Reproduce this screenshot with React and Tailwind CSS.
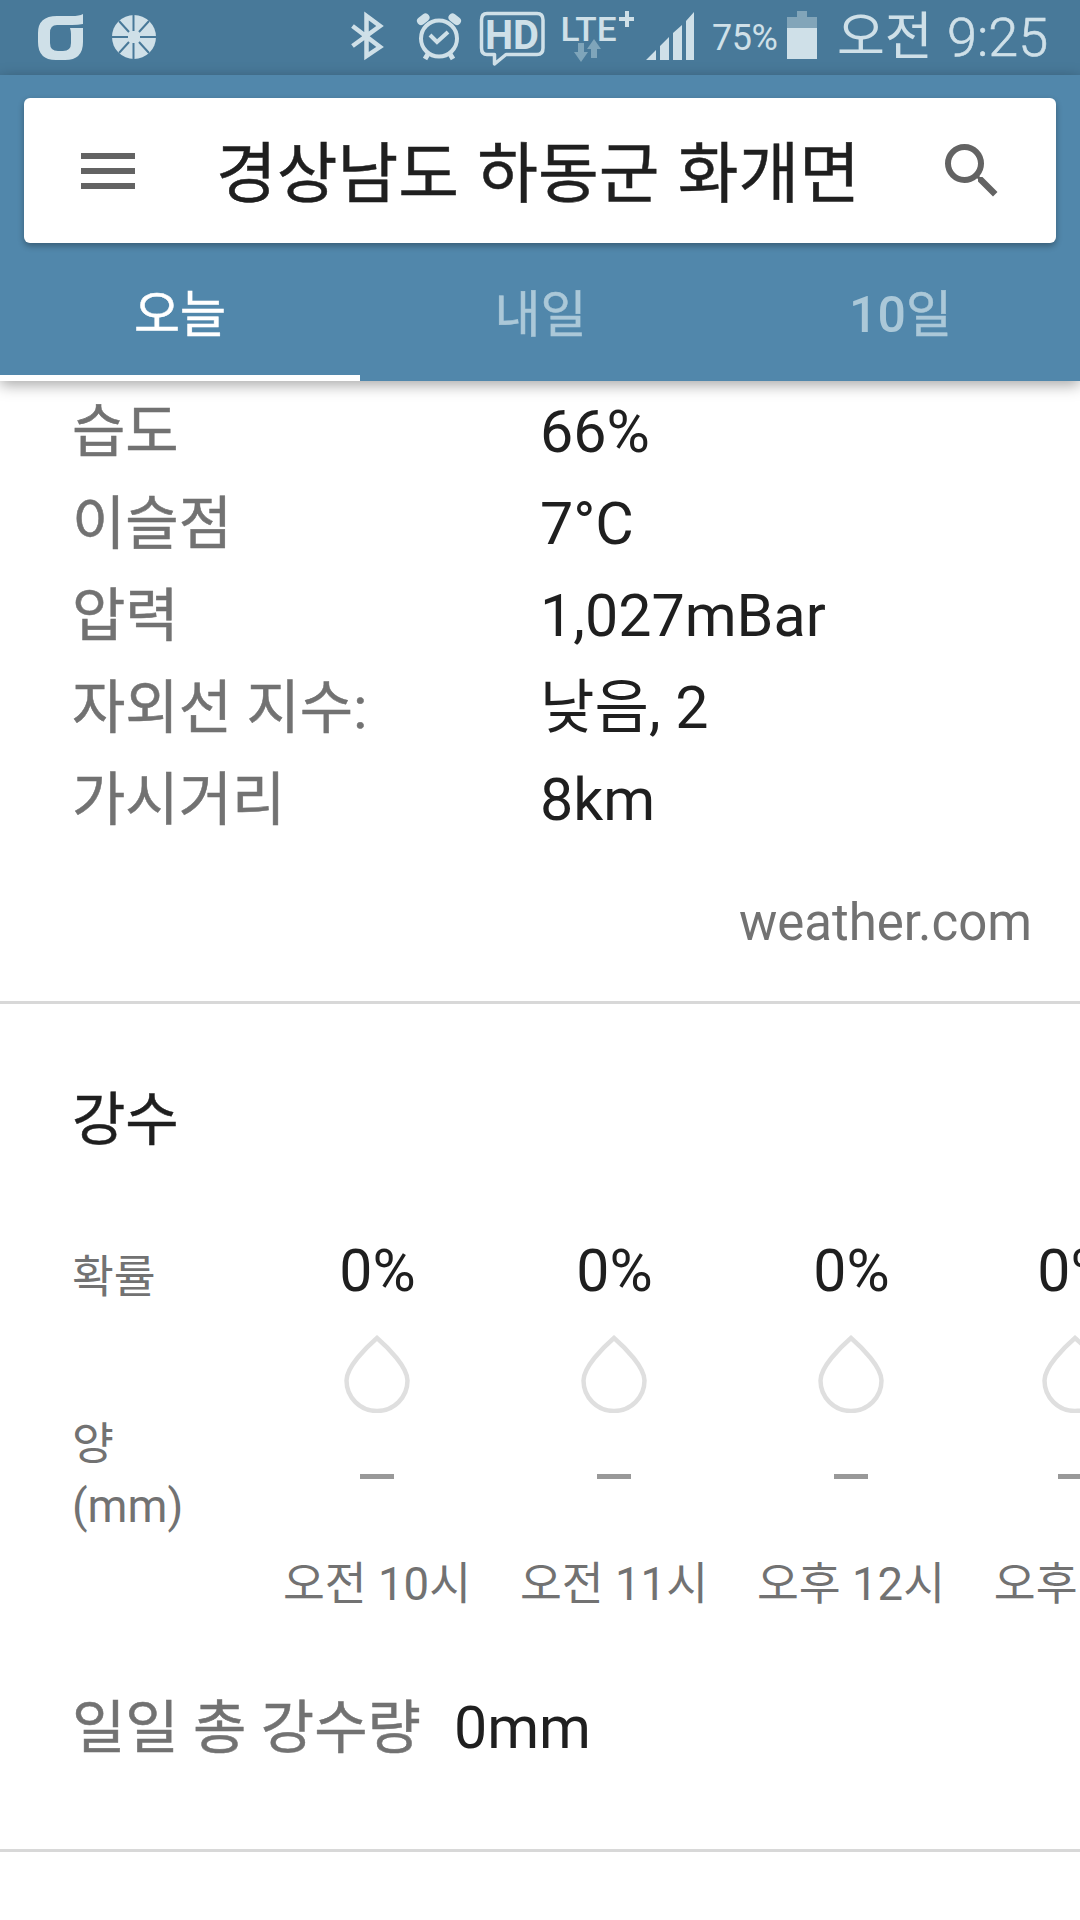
const details = [
  ['습도', '66%'],
  ['이슬점', '7°C'],
  ['압력', '1,027mBar'],
  ['자외선 지수:', '낮음, 2'],
  ['가시거리', '8km'],
];

const hours = ['오전 10시', '오전 11시', '오후 12시', '오후 1시'];

function StatusBar() {
  return (
    <div className="flex h-[75px] items-center bg-[#487999] text-[#cfe0e8]">
      <svg className="h-[75px] w-[700px] shrink-0" viewBox="0 0 700 75" fill="currentColor">
        <path d="M83 14V24Q78 25 72 25H57Q50 25 50 33V43Q50 51 58 51H63Q71 51 71 43V34Q71 31 70 28H83V42Q83 60 65 60H56Q38 60 38 42V33Q38 16 57 16H72Q79 16 83 14Z" />
        <circle cx="134" cy="37" r="22" />
        <g stroke="#487999" strokeWidth="2">
          <path d="M133.500 15V31M133.500 43V59M112 37H128M140 37H156M119 21L129 32M149 21L139 32M119 53L129 42M149 53L139 42" />
        </g>
        <path fill="none" stroke="currentColor" strokeWidth="4.500" d="M352.500 26L380 47L366.500 56V16L380 26L352.500 46" />
        <g fill="none" stroke="currentColor">
          <circle cx="439" cy="38.500" r="18" strokeWidth="4" />
          <path strokeWidth="4" d="M430 35L437 42L448 32" />
          <path strokeWidth="5" d="M428 54L425 59M450 54L453 59" />
          <path strokeWidth="8" strokeLinecap="round" d="M421 21L425.500 17.500M457 21L452.500 17.500" />
          <path strokeWidth="3.500" strokeLinejoin="round" d="M487 13.500H537Q543 13.500 543 20V48Q543 54.500 537 54.500H506L494.500 64V54.500H487Q481.500 54.500 481.500 48V20Q481.500 13.500 487 13.500Z" />
        </g>
        <text x="485" y="48.500" fontSize="40" fontWeight="700" fontFamily="Roboto, sans-serif" textLength="54" lengthAdjust="spacingAndGlyphs">HD</text>
        <text x="560.500" y="40.500" fontSize="34" fontWeight="500" fontFamily="Roboto, sans-serif" textLength="56" lengthAdjust="spacingAndGlyphs">LTE</text>
        <path d="M625 11H629V17H634V21H629V27H625V21H619V17H625Z" />
        <path fill="#7fa5ba" d="M578 43H584V52H588L581 62L574 52H578ZM591 58V49H587L594 39L601 49H597V58Z" />
        <path d="M646 60L656 50V60ZM660 60V46L669 37V60ZM673 60V33L682 25V60ZM686 60V21L694 12V60Z" />
      </svg>
      <span className="ml-[12px] w-[66px] text-[36px] tracking-[-0.5px]">75%</span>
      <svg className="ml-[9px] h-[75px] w-[30px] shrink-0" viewBox="0 0 30 75">
        <path fill="#82a5b9" d="M10 11H20V17H30V28H0V17H10Z" />
        <path fill="#cfe0e8" d="M0 28H30V59H0Z" />
      </svg>
      <span className="ml-[20px] w-[96px] whitespace-nowrap text-[52px] font-normal">오전</span>
      <span className="ml-[14px] whitespace-nowrap text-[54px] font-light [-webkit-text-stroke:0.6px_#cfe0e8]">9:25</span>
    </div>
  );
}

function Header() {
  return (
    <header className="relative h-[306px] bg-[#5187ab] pt-[23px] shadow-[0_4px_14px_rgba(0,0,0,0.35)]">
      <div className="mx-6 flex h-[145px] items-center rounded-[6px] bg-white shadow-[0_3px_6px_rgba(0,0,0,0.3)]">
        <svg className="ml-12 size-[72px] shrink-0" viewBox="0 0 24 24" fill="#636363">
          <path d="M3 18h18v-2H3v2zm0-5h18v-2H3v2zm0-7v2h18V6H3z" />
        </svg>
        <h1 className="ml-[72px] w-[643px] pt-2 text-[66px] whitespace-nowrap text-[#1f1f1f] [word-spacing:2px] [-webkit-text-stroke:0.5px_#1f1f1f]">경상남도 하동군 화개면</h1>
        <svg className="ml-[77px] size-[72px] shrink-0" viewBox="0 0 24 24" fill="#636363">
          <path d="M15.500 14h-.79l-.28-.27A6.471 6.471 0 0 0 16 9.500 6.500 6.500 0 1 0 9.500 16c1.610 0 3.090-.59 4.230-1.570l.27.28v.79l5 4.990L20.490 19l-4.990-5zm-6 0C7.010 14 5 11.990 5 9.500S7.010 5 9.500 5 14 7.010 14 9.500 11.990 14 9.500 14z" />
        </svg>
      </div>
      <nav className="grid h-[138px] grid-cols-3 text-center text-[50px] leading-[144px] text-[#abc8d8]">
        <div className="h-[138px] border-b-[6px] border-white text-white [-webkit-text-stroke:0.5px_white]">오늘</div>
        <div className="pl-px [-webkit-text-stroke:0.5px_#abc8d8]">내일</div>
        <div className="pl-px"><span className="font-medium">10</span><span className="[-webkit-text-stroke:0.5px_#abc8d8]">일</span></div>
      </nav>
    </header>
  );
}

function Hour({ label }) {
  return (
    <div className="flex w-[237px] shrink-0 flex-col items-center last:w-[211px]">
      <div className="h-[99px] pl-[2px] text-[59px] leading-[70px] text-[#1f1f1f]">0%</div>
      <svg className="h-[78px] w-[66px]" viewBox="0 0 66 78" fill="none" stroke="#dfdfdf" strokeWidth="4.500">
        <path d="M33 3C22 12.500 2.500 32 2.500 45.500A30.500 30.500 0 0 0 63.500 45.500C63.500 32 44 12.500 33 3Z" />
      </svg>
      <div className="mt-[61px] h-[5px] w-[34px] bg-[#999]" />
      <div className="mt-[73px] pl-px text-[45.500px] leading-[66px] whitespace-nowrap text-[#727272]">{label}</div>
    </div>
  );
}

export default function App() {
  return (
    <div className="h-[1920px] w-[1080px] overflow-hidden bg-white [font-family:Roboto,'Noto_Sans_CJK_KR',sans-serif]">
      <StatusBar />
      <Header />
      <section className="h-[623px] border-b-[3px] border-[#d8d8d8] px-[72px] pt-[5px]">
        {details.map(([name, value]) => (
          <div key={name} className="flex h-[92px] items-center whitespace-nowrap">
            <div className="w-[468px] text-[58px] text-[#727272] [-webkit-text-stroke:0.5px_#727272]">{name}</div>
            <div className="text-[59.200px] text-[#1f1f1f]">{value}</div>
          </div>
        ))}
        <div className="-mr-[24px] mt-[42px] text-right text-[51px] leading-[70px] text-[#727272]">weather.com</div>
      </section>
      <section className="h-[848px] border-b-[3px] border-[#d8d8d8] pt-[76px]">
        <h2 className="ml-[72px] text-[58px] leading-[80px] text-[#1f1f1f] [-webkit-text-stroke:0.5px_#1f1f1f]">강수</h2>
        <div className="mt-[76px] flex h-[388px]">
          <div className="w-[186px] shrink-0 pl-[72px] text-[45.500px] leading-[63px] text-[#727272]">
            <div className="mt-[10px]">확률</div>
            <div className="mt-[104px]">양</div>
            <div className="-mt-px">(mm)</div>
          </div>
          <div className="ml-[72px] flex">
            {hours.map((h) => <Hour key={h} label={h} />)}
          </div>
        </div>
        <div className="ml-[72px] mt-[61px] flex items-center gap-[33px] leading-[86px]">
          <span className="text-[58px] text-[#727272] [-webkit-text-stroke:0.5px_#727272]">일일 총 강수량</span>
          <span className="text-[59.200px] text-[#1f1f1f]">0mm</span>
        </div>
      </section>
    </div>
  );
}
